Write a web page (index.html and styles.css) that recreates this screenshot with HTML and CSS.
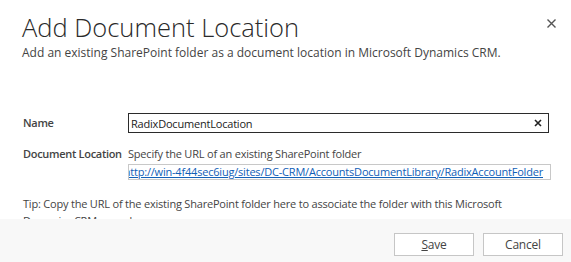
FILE: index.html
```html
<!DOCTYPE html>
<html lang="en">
<head>
    <meta charset="UTF-8">
    <title>Add Document Location</title>
    <link rel="stylesheet" href="styles.css">
</head>
<body>
    <div class="dialog">
        <div class="header">
            <h1 class="title">Add Document Location</h1>
            <button type="button" class="close-button" title="Close">
                <svg width="9" height="9" viewBox="0 0 9 9"><path d="M0.5 0.5L8.5 8.5M8.5 0.5L0.5 8.5" stroke="#555" stroke-width="1.4"/></svg>
            </button>
            <p class="subtitle">Add an existing SharePoint folder as a document location in Microsoft Dynamics CRM.</p>
        </div>

        <div class="content">
            <div class="field">
                <label class="field-label" for="name">Name</label>
                <div class="name-box">
                    <input type="text" id="name" value="RadixDocumentLocation">
                    <svg class="clear" width="8" height="8" viewBox="0 0 8 8"><path d="M1 1L7 7M7 1L1 7" stroke="#222" stroke-width="1.6"/></svg>
                </div>
            </div>

            <div class="field field-location">
                <span class="field-label">Document Location</span>
                <div class="location">
                    <div class="hint">Specify the URL of an existing SharePoint folder</div>
                    <div class="url-box">
                        <a href="#" class="url">http://win-4f44sec6iug/sites/DC-CRM/AccountsDocumentLibrary/RadixAccountFolder</a>
                    </div>
                </div>
            </div>

            <p class="tip">Tip: Copy the URL of the existing SharePoint folder here to associate the folder with this Microsoft Dynamics CRM record.</p>
        </div>

        <div class="footer">
            <button type="button" class="footer-button"><u>S</u>ave</button>
            <button type="button" class="footer-button">Cancel</button>
        </div>
    </div>
</body>
</html>
```

FILE: styles.css
```css
body {
    margin: 0;
    padding: 0;
    background-color: #fff;
    font-family: 'Open Sans', 'Noto Sans', sans-serif;
    color: #444;
}

.dialog {
    width: 571px;
    height: 262px;
    display: flex;
    flex-direction: column;
    overflow: hidden;
}

.header {
    position: relative;
    padding: 10px 22px 0 22px;
}

.title {
    margin: 0;
    font-size: 25.5px;
    font-weight: 300;
    color: #2a2a2a;
    line-height: 34px;
}

.subtitle {
    margin: 1px 0 0 0;
    font-size: 12px;
    color: #444;
    line-height: 16px;
}

.close-button {
    position: absolute;
    top: 19px;
    right: 15px;
    border: none;
    background: none;
    padding: 0;
    cursor: pointer;
}

.close-button svg {
    display: block;
}

.content {
    flex: 1;
    overflow: hidden;
    padding: 52px 20px 0 23px;
    font-size: 11px;
    letter-spacing: -0.2px;
}

.field {
    display: flex;
    align-items: center;
}

.field-label {
    width: 105px;
    flex-shrink: 0;
    white-space: nowrap;
    font-weight: 600;
    letter-spacing: -0.3px;
    line-height: 20px;
    color: #444;
}

.name-box {
    width: 421px;
    height: 20px;
    box-sizing: border-box;
    border: 1px solid #2b2b2b;
    display: flex;
    align-items: center;
}

.name-box input {
    flex: 1;
    min-width: 0;
    border: none;
    outline: none;
    padding: 0 2px;
    font-family: inherit;
    font-size: 11px;
    letter-spacing: -0.2px;
    color: #222;
    background: transparent;
}

.clear {
    flex-shrink: 0;
    margin-right: 6px;
}

.field-location {
    align-items: flex-start;
    margin-top: 13px;
}

.field-location .field-label,
.hint {
    line-height: 15px;
}

.hint {
    color: #444;
}

.url-box {
    width: 423px;
    height: 16px;
    box-sizing: border-box;
    margin-top: 3px;
    border: 1px solid #c8c8c8;
    overflow: hidden;
    white-space: nowrap;
    display: flex;
    justify-content: flex-end;
}

.url {
    line-height: 14px;
    color: #1160b7;
    padding-right: 7px;
}

.tip {
    margin: 15px 0 0 0;
    line-height: 17px;
    color: #444;
}

.footer {
    height: 43px;
    box-sizing: border-box;
    flex-shrink: 0;
    background-color: #f8f8f8;
    display: flex;
    justify-content: flex-end;
    align-items: flex-start;
    gap: 9px;
    padding: 14px 8px 0 0;
}

.footer-button {
    width: 80px;
    height: 23px;
    border: 1px solid #c6c6c6;
    background-color: #fff;
    font-family: inherit;
    font-size: 12px;
    letter-spacing: -0.2px;
    color: #444;
    cursor: pointer;
}
```
